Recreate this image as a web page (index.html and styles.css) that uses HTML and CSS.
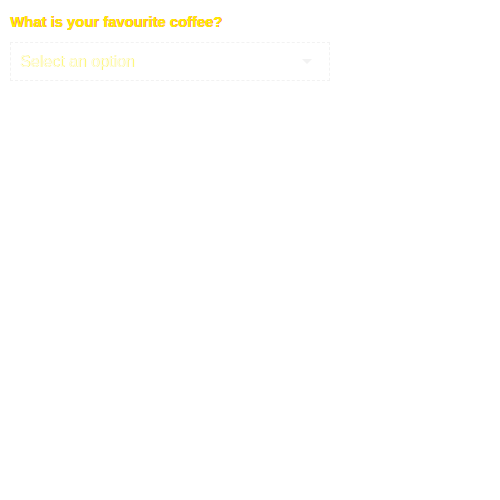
FILE: index.html
```html
<!DOCTYPE html>
<html>
<head>
<meta charset="utf-8">
<link rel="stylesheet" href="styles.css">
</head>
<body>
<div class="field">
  <label class="label" for="coffee">What is your favourite coffee?</label>
  <div class="select">
    <span class="placeholder">Select an option</span>
    <svg class="chevron" width="12" height="8" viewBox="0 0 12 8"><path d="M1 1 L6 6 L11 1" fill="#f2f2f2"/></svg>
  </div>
</div>
</body>
</html>
```
FILE: styles.css
```css
html, body { margin: 0; padding: 0; background: #fff; }
body { font-family: "Liberation Sans", Arial, sans-serif; }
.field { padding: 14px 10px; display: flex; flex-direction: column; gap: 12px; width: 320px; }
.label { font-size: 14.8px; font-weight: bold; color: #fff000; text-shadow: 0.4px 0 0 #ff3000; line-height: 16px; }
.select { height: 37px; border: 1px dashed #f2f2f2; display: flex; align-items: center; justify-content: space-between; padding: 0 16px 0 9px; }
.placeholder { font-size: 16px; color: #fdfdf0; text-shadow: 0.4px 0 0 #fff000; }
.chevron { display: block; }
```
